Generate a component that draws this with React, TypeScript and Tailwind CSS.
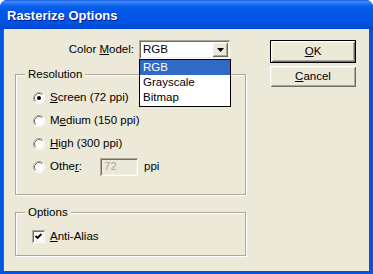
import React from "react";

const raised =
  "shadow-[inset_1px_1px_#ffffff,inset_-1px_-1px_#716f64,inset_2px_2px_#f1efe2,inset_-2px_-2px_#aca899]";
const sunken =
  "shadow-[inset_1px_1px_#aca899,inset_-1px_-1px_#ffffff,inset_2px_2px_#716f64,inset_-2px_-2px_#f1efe2]";

function Radio({ checked }: { checked?: boolean }) {
  return (
    <svg width="12" height="12" viewBox="0 0 12 12" className="shrink-0">
      <circle cx="6" cy="6" r="5.5" fill="#ffffff" />
      <path d="M2.11 9.89 A5.5 5.5 0 0 1 9.89 2.11" fill="none" stroke="#aca899" strokeWidth="1" />
      <path d="M9.89 2.11 A5.5 5.5 0 0 1 2.11 9.89" fill="none" stroke="#ffffff" strokeWidth="1" />
      <path d="M2.82 9.18 A4.5 4.5 0 0 1 9.18 2.82" fill="none" stroke="#716f64" strokeWidth="1" />
      <path d="M9.18 2.82 A4.5 4.5 0 0 1 2.82 9.18" fill="none" stroke="#f1efe2" strokeWidth="1" />
      {checked && <circle cx="6" cy="6" r="2" fill="#000000" />}
    </svg>
  );
}

function Check() {
  return (
    <div className={`w-[13px] h-[13px] bg-white shrink-0 ${sunken}`}>
      <svg width="13" height="13" viewBox="0 0 13 13">
        <polyline points="3.5,6 5.5,8 9.5,4" fill="none" stroke="#000" strokeWidth="1.8" />
      </svg>
    </div>
  );
}

function Group({
  label,
  className,
  children,
}: {
  label: string;
  className?: string;
  children: React.ReactNode;
}) {
  return (
    <div
      className={`w-[231px] border border-[#aca899] shadow-[inset_1px_1px_#ffffff,1px_1px_#ffffff] flex flex-col ${className ?? ""}`}
    >
      <span className="self-start -mt-[7px] ml-[9px] px-[3px] bg-[#ece9d8] leading-[13px]">{label}</span>
      {children}
    </div>
  );
}

export default function App() {
  return (
    <div
      className="w-[373px] h-[274px] bg-[#0054e3] rounded-t-[7px] flex flex-col overflow-hidden text-black"
      style={{ fontFamily: '"Liberation Sans", Arial, sans-serif', fontSize: "11.5px" }}
    >
      {/* Title bar */}
      <div className="h-[29px] shrink-0 flex items-center pl-[7px] bg-[linear-gradient(to_bottom,#0a3fcf_0px,#3d8ffb_1px,#2b7cf6_3px,#0d60ec_6px,#0058ea_10px,#0056e6_18px,#0052df_24px,#0047d3_29px)]">
        <span
          className="text-white font-bold text-[13px] pt-[2px] [text-shadow:1px_1px_#0a1883]"
          style={{ fontFamily: '"Liberation Sans", Arial, sans-serif' }}
        >
          Rasterize Options
        </span>
      </div>

      {/* Body */}
      <div className="flex-1 ml-[3px] mr-[4px] mb-[3px] bg-[#ece9d8] border-l border-[#166aee] flex pl-[11px] pt-[11px]">
        {/* Left column */}
        <div className="w-[231px] flex flex-col">
          <div className="flex items-center justify-end pr-[16px] h-[19px]">
            <span className="mr-[5px]">
              Color <span className="underline">M</span>odel:
            </span>
            <div className="relative w-[91px] h-[19px]">
              <div className={`w-full h-full bg-white flex items-center pl-[4px] pr-[2px] ${sunken}`}>
                <span className="flex-1">RGB</span>
                <div className={`w-[16px] h-[15px] bg-[#ece9d8] flex items-center justify-center ${raised}`}>
                  <svg width="7" height="4" viewBox="0 0 7 4">
                    <polygon points="0,0 7,0 3.5,4" fill="#000" />
                  </svg>
                </div>
              </div>
              <div className="absolute left-0 top-full w-[92px] bg-white border border-black z-10 flex flex-col">
                <div className="h-[15px] leading-[15px] pl-[3px] bg-[#316ac5] text-white">RGB</div>
                <div className="h-[15px] leading-[15px] pl-[3px]">Grayscale</div>
                <div className="h-[15px] leading-[15px] pl-[3px] mb-[1px]">Bitmap</div>
              </div>
            </div>
          </div>

          <Group label="Resolution" className="mt-[15px] pb-[16px]">
            <div className="flex flex-col pt-[5px] pl-[17px]">
              <div className="h-[23px] flex items-center gap-[5px]">
                <Radio checked />
                <span>
                  <span className="underline">S</span>creen (72 ppi)
                </span>
              </div>
              <div className="h-[23px] flex items-center gap-[5px]">
                <Radio />
                <span>
                  M<span className="underline">e</span>dium (150 ppi)
                </span>
              </div>
              <div className="h-[23px] flex items-center gap-[5px]">
                <Radio />
                <span>
                  <span className="underline">H</span>igh (300 ppi)
                </span>
              </div>
              <div className="h-[23px] flex items-center gap-[5px]">
                <Radio />
                <span className="w-[45px]">
                  Othe<span className="underline">r</span>:
                </span>
                <div className={`w-[38px] h-[18px] bg-[#ece9d8] flex items-center pl-[4px] text-[#aca899] ${sunken}`}>
                  72
                </div>
                <span className="ml-[1px]">ppi</span>
              </div>
            </div>
          </Group>

          <Group label="Options" className="mt-[17px] pb-[7px]">
            <div className="pt-[6px] pl-[16px]">
              <div className="h-[23px] flex items-center gap-[5px]">
                <Check />
                <span>
                  <span className="underline">A</span>nti-Alias
                </span>
              </div>
            </div>
          </Group>
        </div>

        {/* Buttons */}
        <div className="ml-[24px] flex flex-col">
          <div className="w-[86px] h-[23px] border border-black">
            <div className={`w-full h-full bg-[#ece9d8] flex items-center justify-center ${raised}`}>
              <span>
                <span className="underline">O</span>K
              </span>
            </div>
          </div>
          <div className={`mt-[3px] w-[86px] h-[21px] bg-[#ece9d8] flex items-center justify-center ${raised}`}>
            <span>
              <span className="underline">C</span>ancel
            </span>
          </div>
        </div>
      </div>
    </div>
  );
}
